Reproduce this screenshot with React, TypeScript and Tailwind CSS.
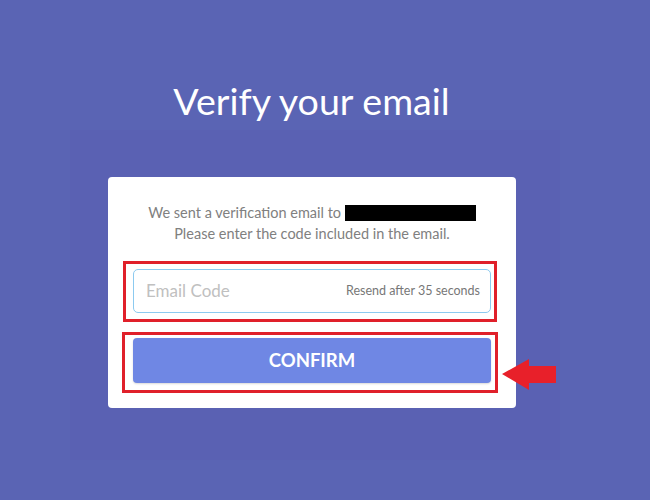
import React from "react";

export default function App() {
  return (
    <div className="h-[500px] w-[650px] overflow-hidden bg-[#5a64b4] font-['Lato',sans-serif] pt-[79px]">
      <h1 className="text-center text-[37.6px] leading-[44px] text-white font-normal pr-[27px]">
        Verify your email
      </h1>
      <div className="mt-[7px] ml-[70px] w-[490px] h-[330px] bg-[#5a61b3] pt-[47px]">
        <div className="relative ml-[38px] w-[408px] rounded-[4px] bg-white px-[25px] pt-[25px] pb-[25px]">
          <p className="text-center text-[14.5px] leading-[21px] text-[#808080]">
            We sent a verification email to{" "}
            <span className="inline-block h-[16px] w-[131px] bg-black align-[-3px]" />
            <br />
            Please enter the code included in the email.
          </p>
          <div className="mt-[25px] flex h-[44px] items-center justify-between rounded-[5px] border border-[#8ccaf0] bg-white pl-[12px] pr-[10px]">
            <span className="text-[17px] text-[#c0c0c0]">Email Code</span>
            <span className="text-[12.5px] text-[#777]">Resend after 35 seconds</span>
          </div>
          <button className="mt-[25px] flex h-[45px] w-full items-center justify-center rounded-[4px] bg-[#6f87e4] text-[18.5px] font-bold text-white shadow-[0_1px_2px_rgba(0,0,0,0.15)]">
            CONFIRM
          </button>

          <div className="pointer-events-none absolute left-[15px] top-[84px] h-[61px] w-[374px] border-[3px] border-[#e0202a]" />
          <div className="pointer-events-none absolute left-[14px] top-[155px] h-[61px] w-[376px] border-[3px] border-[#e0202a]" />
          <svg
            className="absolute left-[394px] top-[182px]"
            width="54"
            height="32"
            viewBox="0 0 54 32"
          >
            <polygon
              points="0,15 27,0 27,7 54,7 54,24 27,24 27,31"
              fill="#e8202a"
            />
          </svg>
        </div>
      </div>
    </div>
  );
}
